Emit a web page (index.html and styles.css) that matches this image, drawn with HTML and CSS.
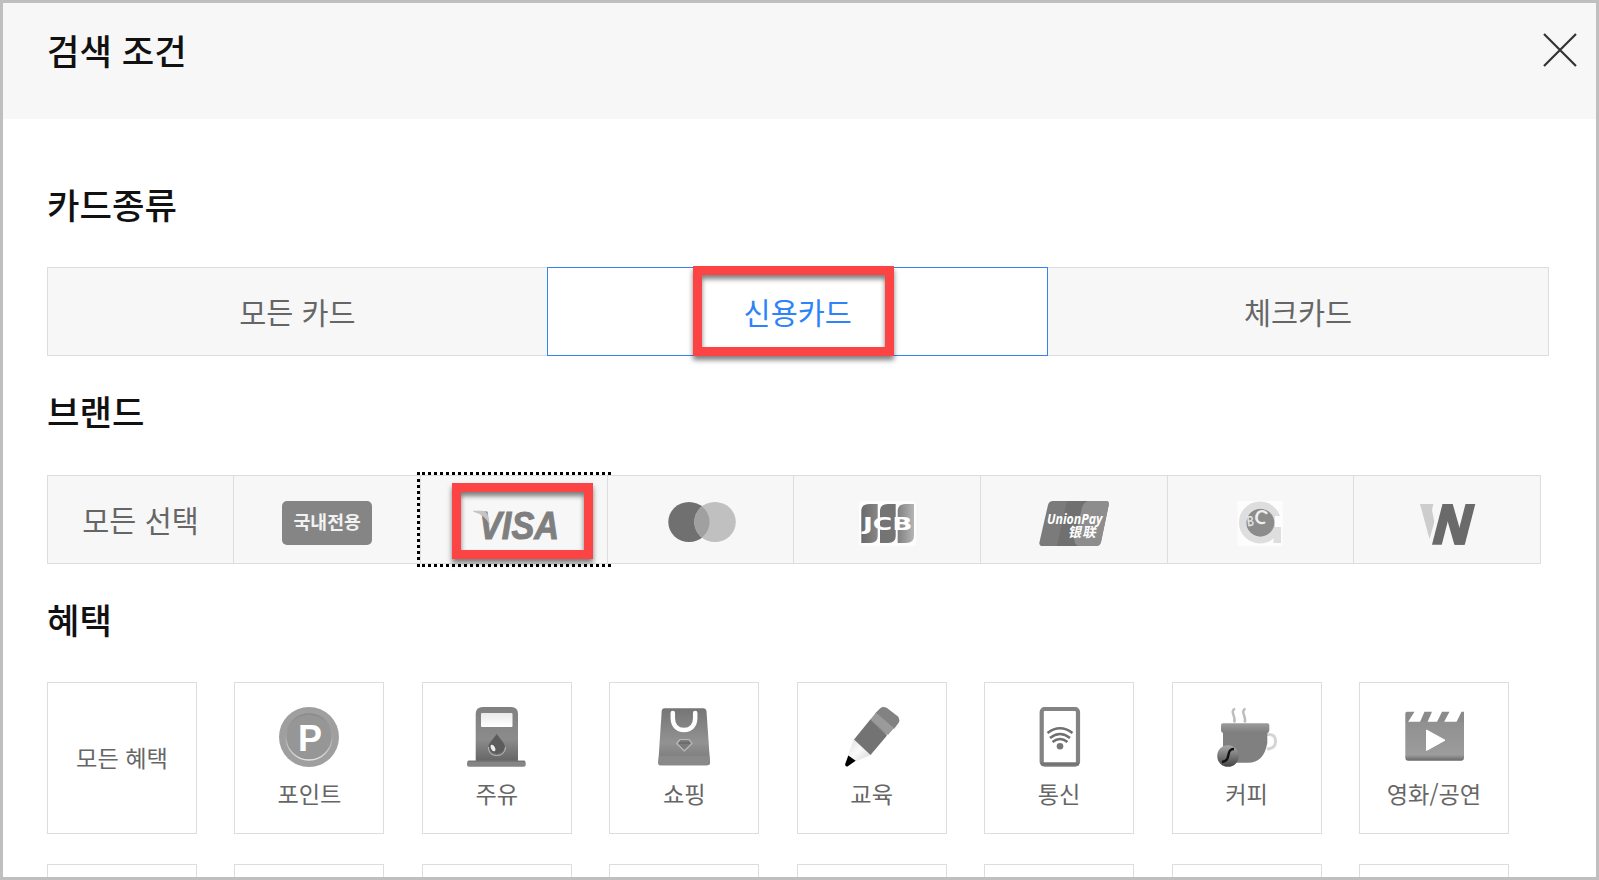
FILE: index.html
```html
<!DOCTYPE html>
<html lang="ko">
  <head>
    <meta charset="UTF-8" />
    <title>검색 조건</title>
    <link rel="stylesheet" href="styles.css">
  </head>
  <body>
    <div class="popup">
      <header>
        <h1>검색 조건</h1>
        <button class="close" aria-label="닫기">
          <svg width="34" height="34" viewBox="0 0 34 34"><path d="M1 1L33 33M33 1L1 33" stroke="#333" stroke-width="2.200" /></svg>
        </button>
      </header>
      <main>
        <h2>카드종류</h2>
        <ul class="card-type">
          <li>모든 카드</li>
          <li class="active">신용카드<span class="mark mark-credit"></span></li>
          <li>체크카드</li>
        </ul>

        <h2 class="brand-title">브랜드</h2>
        <ul class="brand">
          <li class="all">모든 선택</li>
          <li><span class="domestic">국내전용</span></li>
          <li class="focus">
            <svg width="90" height="45" viewBox="0 0 90 45">
              <text x="10" y="37.500" font-family="Liberation Sans" font-size="38" font-weight="bold" font-style="italic" fill="#7f7f7f" stroke="#7f7f7f" stroke-width="1" textLength="80" lengthAdjust="spacingAndGlyphs">VISA</text>
              <path d="M4 9.700H13Q18 10 19 15L21 24Q16 14 4 10.500Z" fill="#c4c4c4" />
            </svg>
            <svg class="dots" width="194" height="95" viewBox="0 0 194 95" fill="none" stroke="#000" stroke-width="3">
              <path d="M0 1.500H3M0 93.500H3" />
              <path d="M5 1.500H194M5 93.500H194" stroke-dasharray="3 3" />
              <path d="M1.500 7V88" stroke-dasharray="3 3" />
            </svg>
            <span class="mark mark-visa"></span>
          </li>
          <li>
            <svg width="90" height="45" viewBox="0 0 90 45">
              <ellipse cx="33" cy="21" rx="20.700" ry="20" fill="#707070" />
              <ellipse cx="59" cy="21" rx="20.800" ry="20" fill="#c0c0c0" />
              <path d="M46 5.500A20.800 20 0 0 0 46 36.500A20.700 20 0 0 0 46 5.500Z" fill="#a0a0a0" />
            </svg>
          </li>
          <li>
            <svg width="90" height="45" viewBox="0 0 90 45">
              <defs>
                <linearGradient id="jcb1"><stop offset="0" stop-color="#6a6a6a" /><stop offset="1" stop-color="#868686" /></linearGradient>
                <linearGradient id="jcb2"><stop offset="0" stop-color="#808080" /><stop offset="1" stop-color="#b5b5b5" /></linearGradient>
              </defs>
              <rect x="17" y="0" width="57" height="45" rx="3" fill="#fdfdfd" />
              <path d="M27 3H35.700V35Q35.700 42 28 42H19.300V10Q19.300 3 27 3Z" fill="url(#jcb1)" />
              <path d="M45.700 3H53.700V35Q53.700 42 46 42H38V10Q38 3 45.700 3Z" fill="#747474" />
              <path d="M63.400 3H72V35Q72 42 64 42H55.700V10Q55.700 3 63.400 3Z" fill="url(#jcb2)" />
              <text x="21" y="28.500" font-family="DejaVu Sans" font-size="17" font-weight="bold" fill="#fff" textLength="49.500" lengthAdjust="spacingAndGlyphs">JCB</text>
            </svg>
          </li>
          <li>
            <svg width="90" height="45" viewBox="0 0 90 45">
              <path d="M24 0H77Q80.500 0 79.700 4L72 41Q71 45 67 45H14Q9.700 45 10.500 41L19 4Q20 0 24 0Z" fill="#7b7b7b" />
              <path d="M38 0H59Q53 2 52.500 9L46 35Q44 42 49 45H28Z" fill="#707070" />
              <path d="M59 0H77Q80.500 0 79.700 4L72 41Q71 45 67 45H49Q44 42 46 35L52.500 9Q53.500 2 59 0Z" fill="#8d8d8d" />
              <text x="18" y="22.500" font-family="Open Sans" font-size="15" font-weight="bold" font-style="italic" fill="#fff" textLength="55.500" lengthAdjust="spacingAndGlyphs">UnionPay</text>
              <text x="46.500" y="36" font-family="Noto Sans CJK SC" font-size="13.500" font-weight="bold" fill="#fff" transform="skewX(-12)" textLength="28">银联</text>
            </svg>
          </li>
          <li>
            <svg width="90" height="45" viewBox="0 0 90 45">
              <rect x="22.500" width="45" height="45" fill="#fdfdfd" />
              <circle cx="45" cy="21.500" r="17.500" fill="none" stroke="#dedede" stroke-width="7" />
              <rect x="60" y="15" width="8" height="11" fill="#fdfdfd" />
              <rect x="58.500" y="26" width="7.500" height="16" fill="#dedede" />
              <circle cx="45.300" cy="21.700" r="14" fill="#8c8c8c" />
              <text x="39" y="22.500" font-family="Lato" font-size="19" font-weight="bold" fill="#eee" transform="rotate(14 45 18)">C</text>
              <text x="32" y="25" font-family="Lato" font-size="14" font-weight="bold" fill="#e4e4e4" textLength="7" lengthAdjust="spacingAndGlyphs" transform="rotate(-8 36 21)">B</text>
            </svg>
          </li>
          <li>
            <svg width="90" height="45" viewBox="0 0 90 45">
              <path d="M18 3H31.300L30 9L32.300 21L27.500 38Z" fill="#cdcdcd" />
              <g fill="#6a6a6a">
                <rect width="9.800" height="40.700" transform="translate(40.500 3) skewX(-14.500)" />
                <rect width="9.800" height="40.700" transform="translate(63.500 3) skewX(-14.500)" />
                <rect width="10" height="40.700" transform="translate(40.700 3) skewX(16)" />
              </g>
            </svg>
          </li>
        </ul>

        <h2 class="benefit-title">혜택</h2>
        <ul class="benefit">
          <li class="all">모든 혜택</li>
          <li>
            <svg width="60" height="60" viewBox="0 0 60 60">
              <defs><linearGradient id="coin" x1="0" y1="0" x2="0" y2="1"><stop offset="0" stop-color="#8a8a8a" /><stop offset=".5" stop-color="#a5a5a5" /><stop offset="1" stop-color="#e4e4e4" /></linearGradient></defs>
              <circle cx="30" cy="30" r="30" fill="#9f9f9f" />
              <circle cx="30" cy="30" r="23" fill="#969696" stroke="url(#coin)" stroke-width="1.300" />
              <text x="19" y="44" font-family="Liberation Sans" font-size="37.500" font-weight="bold" fill="#fff" textLength="24" lengthAdjust="spacingAndGlyphs">P</text>
            </svg>
            <span>포인트</span>
          </li>
          <li>
            <svg width="60" height="60" viewBox="0 0 60 60">
              <defs>
                <linearGradient id="pump" x1="0" y1="0" x2="0" y2="1"><stop offset="0" stop-color="#808080" /><stop offset=".6" stop-color="#8b8b8b" /><stop offset="1" stop-color="#666" /></linearGradient>
                <linearGradient id="glass" x1="0" y1="0" x2="0" y2="1"><stop offset="0" stop-color="#e9e9e9" /><stop offset="1" stop-color="#fff" /></linearGradient>
              </defs>
              <path d="M16 0H44Q51 0 51 7V54H8.700V7Q8.700 0 16 0Z" fill="url(#pump)" />
              <rect x="14" y="6" width="31.500" height="14" rx="1" fill="url(#glass)" />
              <path d="M29.700 27C33 32 38 36 38 40.500A8.500 8 0 0 1 21.400 40.500C21.400 36 26.500 32 29.700 27Z" fill="#5c5c5c" />
              <path d="M21.500 40Q21.500 48.500 29.700 48.500Q38 48.500 38.500 40" fill="none" stroke="#bbb" />
              <ellipse cx="26" cy="41" rx="2" ry="3.500" fill="#eee" transform="rotate(-25 26 41)" />
              <rect x="0" y="53.700" width="58.700" height="6" rx="2" fill="#858585" />
              <path d="M1 54.200H58" stroke="#6e6e6e" />
            </svg>
            <span>주유</span>
          </li>
          <li>
            <svg width="60" height="60" viewBox="0 0 60 60">
              <defs><linearGradient id="bag" x1="0" y1="0" x2="0" y2="1"><stop offset="0" stop-color="#757575" /><stop offset=".6" stop-color="#929292" /><stop offset="1" stop-color="#747474" /></linearGradient></defs>
              <path d="M10.500 1.300H49.500Q52 1.300 52.500 4L56 55.500Q56 58.300 53 58.300H7Q4.200 58.300 4.300 55.500L7.700 4Q8 1.300 10.500 1.300Z" fill="url(#bag)" />
              <path d="M5 49H55.500L56 55.500Q56 58.300 53 58.300H7Q4.200 58.300 4.300 55.500Z" fill="#898989" />
              <path d="M18.800 6V11C18.800 18 23 23 30 23S41.200 18 41.200 11V6" fill="none" stroke="#fff" stroke-width="4.500" stroke-linecap="round" />
              <path d="M26 32.500H35L38 36.500L30.300 44L22.700 36.500Z" fill="#7c7c7c" stroke="#bcbcbc" stroke-width="1.200" />
              <path d="M25 36H36" stroke="#5f5f5f" />
            </svg>
            <span>쇼핑</span>
          </li>
          <li>
            <svg width="60" height="60" viewBox="0 0 60 60">
              <defs><linearGradient id="wood" x1="0" y1="0" x2="1" y2="1"><stop offset="0" stop-color="#ddd" /><stop offset=".5" stop-color="#fafafa" /><stop offset="1" stop-color="#d5d5d5" /></linearGradient></defs>
              <path d="M12 32L28.500 48L13.500 54.500L5.500 48.500Z" fill="url(#wood)" />
              <path d="M6.300 48.500L13.700 53.700L5.500 59.500Q3 60 3.200 57Z" fill="#000" />
              <path d="M12 32.500L28.500 12.300L45 28.500L28.500 48Z" fill="#737373" />
              <path d="M38 1.500Q41 -1 45 1L56 9.500Q58.500 13 56.500 16L52 22L33 6.500Z" fill="#828282" />
              <path d="M34.500 5L52.500 20.500L46 28Q43 26.500 37 21Q30 15.500 28.500 12.300Z" fill="#9a9a9a" />
              <path d="M34.500 5.500L52 20.500M28.500 13L44.500 27.500" stroke="#777" stroke-width=".8" />
            </svg>
            <span>교육</span>
          </li>
          <li>
            <svg width="60" height="60" viewBox="0 0 60 60">
              <rect x="12.700" y="2" width="36.300" height="55.700" rx="3" fill="#fff" stroke="#838383" stroke-width="4.200" />
              <path d="M12 57H50" stroke="#747474" stroke-width="3" />
              <g fill="none" stroke="#707070" stroke-width="2.600">
                <path d="M18.500 26Q31 16.500 43.500 26" />
                <path d="M21 31Q31 23 41 31" />
                <path d="M23.500 35Q31 29 38.500 35" />
              </g>
              <circle cx="31" cy="39.300" r="3.300" fill="#777" />
            </svg>
            <span>통신</span>
          </li>
          <li>
            <svg width="60" height="60" viewBox="0 0 60 60">
              <defs>
                <linearGradient id="rim" x1="0" y1="0" x2="0" y2="1"><stop offset="0" stop-color="#9c9c9c" /><stop offset="1" stop-color="#7d7d7d" /></linearGradient>
                <linearGradient id="bean" x1="0" y1="0" x2="0" y2="1"><stop offset="0" stop-color="#aaa" /><stop offset="1" stop-color="#444" /></linearGradient>
              </defs>
              <path d="M18 1.500C12 5 20 10 17 15.500M28.500 1.500C22.500 5 30.500 10 27.500 15.500" fill="none" stroke="#bdbdbd" stroke-width="2.500" />
              <path d="M50 27.500H52Q58.500 27.500 58.500 34.500T50 42" fill="none" stroke="#d5d5d5" stroke-width="3" />
              <path d="M6 24H50.300V36Q47 55.700 31 55.700H15Q6 53 6 40Z" fill="#808080" />
              <path d="M4 18Q4 16.300 6 16.300H50.500Q52.300 16.300 52.300 18V23Q52.300 26 49.500 26H7Q4 26 4 23Z" fill="url(#rim)" />
              <circle cx="11" cy="49" r="10.800" fill="url(#bean)" />
              <path d="M17 42C8 42 15 54 5 55" fill="none" stroke="#111" stroke-width="2.400" />
            </svg>
            <span>커피</span>
          </li>
          <li>
            <svg width="60" height="60" viewBox="0 0 60 60">
              <defs><linearGradient id="film" x1="0" y1="0" x2="0" y2="1"><stop offset="0" stop-color="#909090" /><stop offset=".85" stop-color="#9c9c9c" /><stop offset="1" stop-color="#686868" /></linearGradient></defs>
              <path d="M1.300 15V6.500Q1.300 4.700 3 4.700H10.500L4 15ZM20.500 4.700H28L23.500 15H16ZM38 4.700H45.500L40 15H33ZM57.500 4.700H60V15H52.500Z" fill="#8b8b8b" />
              <path d="M1.300 14.700H60V50.500Q60 53.700 57 53.700H4.300Q1.300 53.700 1.300 50.500Z" fill="url(#film)" />
              <path d="M22.500 23V43.500L41 33.200Z" fill="#fff" stroke="#fff" stroke-linejoin="round" />
            </svg>
            <span>영화/공연</span>
          </li>
          <li></li>
          <li></li>
          <li></li>
          <li></li>
          <li></li>
          <li></li>
          <li></li>
          <li></li>
        </ul>
      </main>
    </div>
  </body>
</html>
```

FILE: styles.css
```css
* {
  margin: 0;
  padding: 0;
  box-sizing: border-box;
}
body {
  font-family: "Noto Sans CJK KR", sans-serif;
  color: #666;
  background: #fff;
  overflow: hidden;
}
.popup {
  width: 100%;
  height: 880px;
  border: 3px solid #bfbfbf;
  overflow: hidden;
}
header {
  display: flex;
  justify-content: space-between;
  align-items: flex-start;
  height: 116px;
  padding: 27px 19px 0 44px;
  background: #f7f7f7;
}
h1,
h2 {
  font-size: 35.3px;
  font-weight: 500;
  line-height: 40px;
  color: #111;
}
.close {
  margin-top: 3px;
  height: 34px;
  border: 0;
  background: none;
  cursor: pointer;
}
.close svg {
  display: block;
}
main {
  padding: 65px 0 0 44px;
}
h2 {
  margin-bottom: 43px;
}
ul {
  display: flex;
  list-style: none;
}
ul + h2 {
  margin-top: 35px;
}
.brand-title {
  margin-bottom: 44px;
}

.card-type {
  width: 1502px;
  margin-left: -0.3px;
}
.card-type li {
  position: relative;
  flex: 1;
  height: 89px;
  border: 1px solid #ddd;
  background: #f7f7f7;
  font-size: 29.4px;
  line-height: 87px;
  text-align: center;
}
.card-type li + li {
  margin-left: -1px;
}
.card-type .active {
  z-index: 1;
  border-color: #3284f5;
  background: #fff;
  color: #2d83f7;
}

.brand {
  margin-left: -0.3px;
}
.brand li {
  position: relative;
  display: flex;
  justify-content: center;
  width: 187.66px;
  height: 89px;
  padding-top: 25px;
  border: 1px solid #ddd;
  background: #f7f7f7;
}
.brand li + li {
  margin-left: -1px;
}
.brand svg {
  overflow: visible;
}
.brand .focus {
  z-index: 1;
}
.brand .all {
  padding-top: 0;
  font-size: 29.4px;
  line-height: 87px;
}
.domestic {
  width: 90px;
  height: 44px;
  border-radius: 5px;
  background: #858585;
  color: #f2f2f2;
  font-size: 18.3px;
  font-weight: 700;
  line-height: 41px;
  text-align: center;
}
.dots {
  position: absolute;
  top: -4px;
  left: -4px;
  z-index: 1;
}

/* red highlight frames */
.mark {
  position: absolute;
  z-index: 2;
  border: 9px solid #fd4444;
  box-shadow: 0 4px 5px rgba(0, 0, 0, 0.5), inset 0 4px 5px rgba(0, 0, 0, 0.5);
}
.mark-credit {
  top: -2px;
  left: 145px;
  width: 201px;
  height: 90px;
}
.mark-visa {
  top: 7px;
  left: 31px;
  width: 141px;
  height: 76px;
}

.benefit {
  display: grid;
  grid-template-columns: repeat(8, 150px);
  column-gap: 37.43px;
  row-gap: 30px;
}
.benefit li {
  display: flex;
  flex-direction: column;
  align-items: center;
  height: 152px;
  padding-top: 24px;
  border: 1px solid #ddd;
  font-size: 23.2px;
  line-height: 30px;
  white-space: nowrap;
}
.benefit span {
  margin-top: 11px;
}
.benefit .all {
  justify-content: center;
  padding: 0 0 2px;
}
```
